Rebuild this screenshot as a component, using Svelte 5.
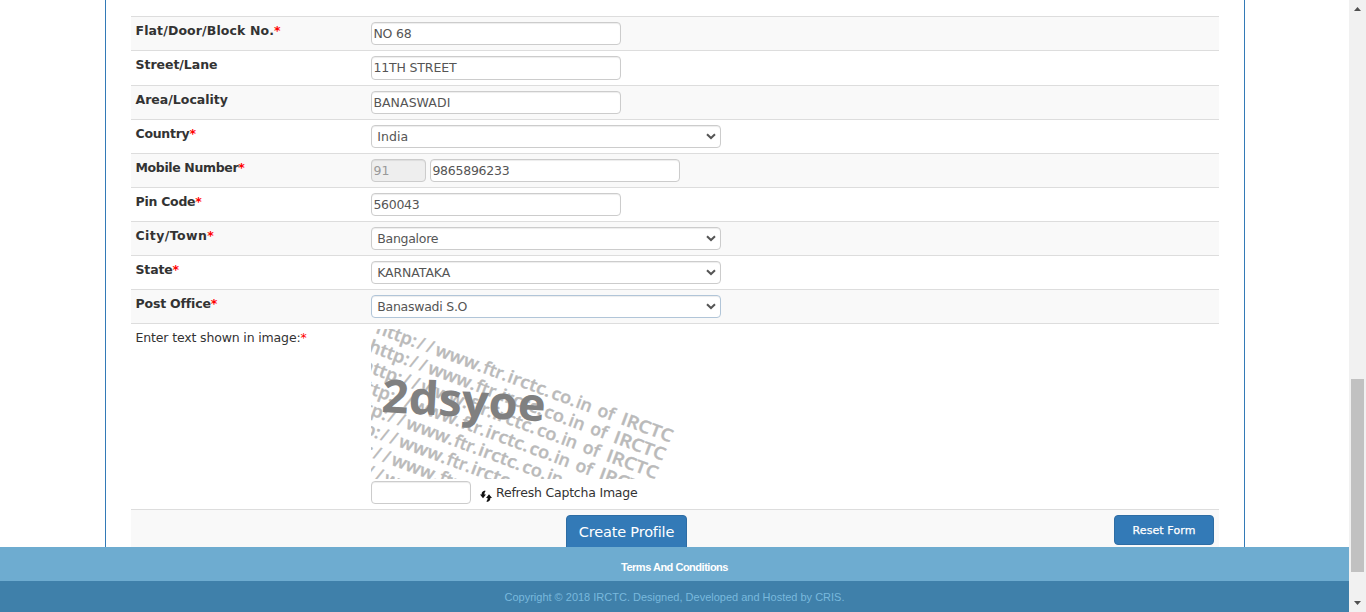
<script>
  const rows = [
    { label: 'Flat/Door/Block No.', req: true, kind: 'text', value: 'NO 68', lw: 138.6, vw: 38 },
    { label: 'Street/Lane', req: false, kind: 'text', value: '11TH STREET', tall: true, lw: 82, vw: 83 },
    { label: 'Area/Locality', req: false, kind: 'text', value: 'BANASWADI', lw: 92.5, vw: 77 },
    { label: 'Country', req: true, kind: 'select', value: 'India', lw: 54, vw: 31 },
    { label: 'Mobile Number', req: true, kind: 'phone', value: '9865896233', lw: 102.7, vw: 77 },
    { label: 'Pin Code', req: true, kind: 'text', value: '560043', lw: 59.8, vw: 46 },
    { label: 'City/Town', req: true, kind: 'select', value: 'Bangalore', lw: 71.8, vw: 61 },
    { label: 'State', req: true, kind: 'select', value: 'KARNATAKA', lw: 37, vw: 73 },
    { label: 'Post Office', req: true, kind: 'select', value: 'Banaswadi S.O', focus: true, lw: 74, vw: 90 }
  ];
  const lines = [0, 1, 2, 3, 4, 5, 6, 7];
  // Text, start and width of each part of a background line.
  const parts = [
    ['http:', 0, 42],
    ['/', 44, 6],
    ['/', 54, 6],
    ['www.', 63, 50],
    ['ftr.', 114, 25],
    ['irctc.', 140, 45],
    ['co.', 187, 25],
    ['in', 213, 16],
    ['of', 236, 17],
    ['IRCTC', 261, 54]
  ];

  // Spreads a text evenly over a given width.
  function fit(node, width) {
    const n = node.textContent.length;
    const w = node.getBoundingClientRect().width;
    node.style.letterSpacing = (width - w) / n + 'px';
  }
</script>

<div class="page">
  <div class="content">
    <main>
      <div class="table">
        {#each rows as r}
          <div class="row" class:tall={r.tall}>
            <div class="label"><b use:fit={r.lw}>{r.label}</b>{#if r.req}<b class="star">*</b>{/if}</div>
            <div class="cell">
              {#if r.kind === 'phone'}
                <div class="field code"><span use:fit={16}>91</span></div>
              {/if}
              <div class="field" class:select={r.kind === 'select'} class:focus={r.focus}>
                <span use:fit={r.vw}>{r.value}</span>
                {#if r.kind === 'select'}
                  <svg class="chev" width="10" height="7" viewBox="0 0 10 7"><path d="M1 1.2 L5 5 L9 1.2" fill="none" stroke="#555" stroke-width="2" /></svg>
                {/if}
              </div>
            </div>
          </div>
        {/each}
        <div class="row captcha">
          <div class="label"><span use:fit={165}>Enter text shown in image:</span><span class="star">*</span></div>
          <div class="stack">
            <svg width="306" height="150" viewBox="0 0 306 150">
              <g class="noise">
                {#each lines as i}
                  <text transform="translate({4 - i * 7.3} {3.8 + i * 18.3}) rotate(20.4)">{#each parts as [t, x, w]}<tspan {x} textLength={w} lengthAdjust="spacingAndGlyphs">{t}</tspan>{/each}</text>
                {/each}
              </g>
              <text class="word" transform="translate(10 83) rotate(3.3)" textLength="164" lengthAdjust="spacingAndGlyphs">2dsyoe</text>
            </svg>
            <div class="entry">
              <div class="field answer"></div>
              <svg class="refresh" width="12" height="12" viewBox="0 0 12 12"><path d="M5.2 0.6 Q1.6 1 1.6 4.5 H0 L3 8.2 L6 4.5 H4.4 Q4.2 2.4 5.4 1.6Z M6.8 12 Q10.4 11.6 10.4 8 H12 L9 4.2 L6 8 H7.6 Q7.8 10.2 6.6 11Z" fill="#111" /></svg>
              <span use:fit={141.5}>Refresh Captcha Image</span>
            </div>
          </div>
        </div>
        <div class="row actions">
          <div class="create"><span use:fit={95.5}>Create Profile</span></div>
          <div class="reset"><span use:fit={63}>Reset Form</span></div>
        </div>
      </div>
    </main>
    <div class="terms"><span use:fit={107}>Terms And Conditions</span></div>
    <div class="copy"><span use:fit={340}>Copyright © 2018 IRCTC. Designed, Developed and Hosted by CRIS.</span></div>
  </div>
  <div class="scroll">
    <svg width="7" height="4" viewBox="0 0 7 4"><path d="M0 4 L3.5 0 L7 4Z" fill="#505050" /></svg>
    <div class="thumb"></div>
    <svg width="7" height="4" viewBox="0 0 7 4"><path d="M0 0 L3.5 4 L7 0Z" fill="#505050" /></svg>
  </div>
</div>

<style>
  :global(body) { margin: 0; overflow: hidden; }
  .page { display: flex; width: 1366px; height: 612px; overflow: hidden; background: #fff; font-family: Verdana, "DejaVu Sans", sans-serif; font-size: 12.5px; color: #333; }
  .page * { box-sizing: border-box; }
  .page span, .page b { white-space: pre; }
  .content { width: 1349px; }
  main { width: 1140px; height: 547px; margin-left: 105px; border: solid #337ab7; border-width: 0 1px; padding: 16px 25px 0; overflow: hidden; }
  .table { width: 1088px; }
  .row { display: flex; height: 34px; border-top: 1px solid #ddd; padding: 5px 5px 0 4.5px; }
  .row:nth-child(odd) { background: #f9f9f9; }
  .row.tall { height: 35px; }
  .row.captcha { height: 186px; background: #fff; }
  .label { width: 235.5px; line-height: 18px; }
  .star { color: #f00; }
  .cell { display: flex; gap: 4px; }
  .field { width: 250px; height: 23px; border: 1px solid #ccc; border-radius: 4px; background: #fff; color: #555; line-height: 21px; padding-left: 1.4px; box-shadow: inset 0 1px 1px rgba(0, 0, 0, 0.075); }
  .tall .field { height: 24px; }
  .field.select { width: 350px; padding: 0 4px 0 5.2px; display: flex; align-items: center; justify-content: space-between; }
  .field.focus { border-color: #b1c5d8; }
  .field.code { width: 55px; background: #eee; color: #999; }
  .captcha svg { display: block; }
  .noise { font-family: "Open Sans", sans-serif; font-weight: 600; font-size: 17.5px; fill: #bababa; stroke: #bababa; stroke-width: 0.35px; }
  .word { font-family: "Open Sans", sans-serif; font-weight: 700; font-size: 46px; fill: #808080; }
  .entry { display: flex; align-items: center; margin-top: 2px; }
  .field.answer { width: 100px; }
  .refresh { margin: 6px 4px 0 9px; }
  .actions { height: 60px; justify-content: space-between; }
  .create, .reset { background: #337ab7; border: 1px solid #2e6da4; border-radius: 4px; color: #fff; text-align: center; }
  .create { width: 121px; height: 36px; margin-left: 430.5px; font-size: 14.5px; line-height: 33px; }
  .reset { width: 100px; height: 30px; font-size: 11px; line-height: 29px; -webkit-text-stroke: 0.25px #fff; }
  .terms, .copy { text-align: center; font-family: "Liberation Sans", Arial, sans-serif; font-size: 11px; }
  .terms { height: 34px; background: #6eacd0; color: #fff; font-weight: 700; line-height: 40px; }
  .copy { height: 31px; background: #3f80aa; color: #79b9dd; line-height: 32px; }
  .scroll { width: 17px; background: #f1f1f1; display: flex; flex-direction: column; align-items: center; padding: 7px 0; }
  .thumb { width: 13px; height: 193px; margin: 368px 0 29px; background: #c1c1c1; }
</style>
